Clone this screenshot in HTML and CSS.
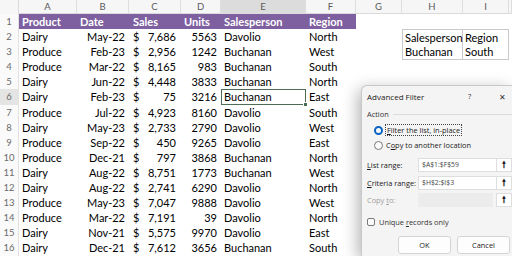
FILE: index.html
```html
<!DOCTYPE html>
<html>
<head>
<meta charset="utf-8">
<link rel="stylesheet" href="styles.css">
</head>
<body>
<div class="sheet">
  <div class="row colhead">
    <div class="corner"></div>
    <div class="ch">A</div><div class="ch">B</div><div class="ch">C</div><div class="ch">D</div>
    <div class="ch sel">E</div><div class="ch">F</div><div class="ch">G</div><div class="ch">H</div><div class="ch">I</div><div class="ch"></div>
  </div>
  <div class="row head">
    <div class="rn">1</div>
    <div class="c th">Product</div><div class="c th">Date</div><div class="c th sales-h">Sales</div><div class="c th">Units</div><div class="c th">Salesperson</div><div class="c th">Region</div>
    <div class="c"></div><div class="c"></div><div class="c"></div><div class="c"></div>
  </div>
  <div class="row"><div class="rn">2</div><div class="c">Dairy</div><div class="c r">May-22</div><div class="c acc"><span>$</span><span>7,686</span></div><div class="c r">5563</div><div class="c">Davolio</div><div class="c">North</div><div class="c"></div><div class="c crit ctl">Salesperson</div><div class="c crit ctr">Region</div><div class="c"></div></div>
  <div class="row"><div class="rn">3</div><div class="c">Produce</div><div class="c r">Feb-23</div><div class="c acc"><span>$</span><span>2,956</span></div><div class="c r">1242</div><div class="c">Buchanan</div><div class="c">West</div><div class="c"></div><div class="c crit cbl">Buchanan</div><div class="c crit cbr">South</div><div class="c"></div></div>
  <div class="row"><div class="rn">4</div><div class="c">Produce</div><div class="c r">Mar-22</div><div class="c acc"><span>$</span><span>8,165</span></div><div class="c r">983</div><div class="c">Buchanan</div><div class="c">South</div></div>
  <div class="row"><div class="rn">5</div><div class="c">Dairy</div><div class="c r">Jun-22</div><div class="c acc"><span>$</span><span>4,448</span></div><div class="c r">3833</div><div class="c">Buchanan</div><div class="c">North</div></div>
  <div class="row"><div class="rn rsel">6</div><div class="c">Dairy</div><div class="c r">Feb-23</div><div class="c acc"><span>$</span><span>75</span></div><div class="c r">3216</div><div class="c active">Buchanan<span class="handle"></span></div><div class="c">East</div></div>
  <div class="row"><div class="rn">7</div><div class="c">Produce</div><div class="c r">Jul-22</div><div class="c acc"><span>$</span><span>4,923</span></div><div class="c r">8160</div><div class="c">Davolio</div><div class="c">South</div></div>
  <div class="row"><div class="rn">8</div><div class="c">Dairy</div><div class="c r">May-23</div><div class="c acc"><span>$</span><span>2,733</span></div><div class="c r">2790</div><div class="c">Davolio</div><div class="c">West</div></div>
  <div class="row"><div class="rn">9</div><div class="c">Produce</div><div class="c r">Sep-22</div><div class="c acc"><span>$</span><span>450</span></div><div class="c r">9265</div><div class="c">Davolio</div><div class="c">East</div></div>
  <div class="row"><div class="rn">10</div><div class="c">Produce</div><div class="c r">Dec-21</div><div class="c acc"><span>$</span><span>797</span></div><div class="c r">3868</div><div class="c">Buchanan</div><div class="c">North</div></div>
  <div class="row"><div class="rn">11</div><div class="c">Dairy</div><div class="c r">Aug-22</div><div class="c acc"><span>$</span><span>8,751</span></div><div class="c r">1773</div><div class="c">Buchanan</div><div class="c">West</div></div>
  <div class="row"><div class="rn">12</div><div class="c">Dairy</div><div class="c r">Aug-22</div><div class="c acc"><span>$</span><span>2,741</span></div><div class="c r">6290</div><div class="c">Davolio</div><div class="c">North</div></div>
  <div class="row"><div class="rn">13</div><div class="c">Produce</div><div class="c r">May-23</div><div class="c acc"><span>$</span><span>7,047</span></div><div class="c r">9888</div><div class="c">Davolio</div><div class="c">West</div></div>
  <div class="row"><div class="rn">14</div><div class="c">Produce</div><div class="c r">Mar-22</div><div class="c acc"><span>$</span><span>7,191</span></div><div class="c r">39</div><div class="c">Davolio</div><div class="c">North</div></div>
  <div class="row"><div class="rn">15</div><div class="c">Dairy</div><div class="c r">Nov-21</div><div class="c acc"><span>$</span><span>5,575</span></div><div class="c r">9970</div><div class="c">Davolio</div><div class="c">East</div></div>
  <div class="row"><div class="rn">16</div><div class="c">Dairy</div><div class="c r">Dec-21</div><div class="c acc"><span>$</span><span>7,612</span></div><div class="c r">3656</div><div class="c">Buchanan</div><div class="c">South</div></div>
</div>

<div class="dialog">
  <div class="titlebar">
    <span class="title">Advanced Filter</span>
    <span class="help">?</span>
    <span class="close">✕</span>
  </div>
  <div class="body">
    <div class="group"><span>Action</span><span class="line"></span></div>
    <div class="radio-row"><span class="radio on"></span><span class="focus"><u>F</u>ilter the list, in-place</span></div>
    <div class="radio-row"><span class="radio"></span><span>C<u>o</u>py to another location</span></div>
    <div class="field first"><span class="lbl"><u>L</u>ist range:</span><span class="inp">$A$1:$F$59</span><span class="pick">🠕</span></div>
    <div class="field"><span class="lbl"><u>C</u>riteria range:</span><span class="inp">$H$2:$I$3</span><span class="pick">🠕</span></div>
    <div class="field dis"><span class="lbl">Copy <u>t</u>o:</span><span class="inp off"></span><span class="pick">🠕</span></div>
    <div class="check-row"><span class="box"></span><span>Unique <u>r</u>ecords only</span></div>
    <div class="buttons"><span class="btn">OK</span><span class="btn">Cancel</span></div>
  </div>
</div>
</body>
</html>
```

FILE: styles.css
```css
html, body {
  margin: 0;
  padding: 0;
  width: 512px;
  height: 256px;
  overflow: hidden;
  background: #ffffff;
}
.sheet {
  font-family: Lato, "Liberation Sans", sans-serif;
  font-size: 11px;
  color: #000;
}
.row {
  display: grid;
  grid-template-columns: 19px 58px 52px 52px 40px 85px 50px 46px 61px 46px 3px;
  height: 15.1px;
  line-height: 15.1px;
}
.colhead {
  height: 14px;
  line-height: 14px;
  background: #f6f6f6;
  border-bottom: 1px solid #dadada;
  box-sizing: border-box;
}
.corner { background: #f6f6f6; border-right: 1px solid #dadada; }
.ch {
  text-align: center;
  font-size: 9.5px;
  color: #5a5a5a;
  border-right: 1px solid #dedede;
}
.ch.sel { background: #dcdcdc; }
.rn {
  font-size: 9.5px;
  color: #6a6a6a;
  text-align: center;
  background: #fafafa;
  border-right: 1px solid #e2e2e2;
}
.rn.rsel { background: #e4e4e4; }
.c {
  padding: 0 2px 0 3px;
  white-space: nowrap;
  overflow: visible;
  position: relative;
}
.r { text-align: right; padding-right: 4px; }
.head .th {
  background: #7e60a0;
  color: #fff;
  font-weight: 700;
}
.sales-h { padding-left: 4px; }
.acc {
  display: flex;
  justify-content: space-between;
  padding: 0 5px 0 4px;
}
.active {
  outline: 1.5px solid #4e6b58;
  outline-offset: -1px;
}
.handle {
  position: absolute;
  right: -2px;
  bottom: -2px;
  width: 3px;
  height: 3px;
  background: #4e6b58;
  border: 1px solid #fff;
}
.crit {
  border-color: #c9c9c9;
  border-style: solid;
  border-width: 0;
  padding-left: 2px;
}
.ctl { border-width: 1px 1px 0 1px; }
.ctr { border-width: 1px 1px 0 0; }
.cbl { border-width: 0 1px 1px 1px; }
.cbr { border-width: 0 1px 1px 0; }

/* dialog */
.dialog {
  position: absolute;
  left: 361px;
  top: 85px;
  width: 151px;
  height: 171px;
  background: #f4f4f4;
  border: 1px solid #c8c8c8;
  border-right: none;
  border-bottom: none;
  border-radius: 6px 0 0 0;
  box-shadow: -3px 4px 16px rgba(0,0,0,0.30);
  font-family: "Open Sans", "Noto Sans", sans-serif;
  font-size: 7.4px;
  color: #1b1b1b;
  box-sizing: border-box;
  overflow: hidden;
}
.titlebar {
  height: 20px;
  display: flex;
  align-items: center;
  padding-left: 5px;
  font-size: 8px;
}
.title { width: 101px; }
.help { width: 31px; color: #333; font-size: 7.5px; }
.close { font-size: 8px; color: #333; }
.body {
  display: flex;
  flex-direction: column;
  padding: 0 0 0 5px;
}
.group {
  margin-top: 2px;
  height: 12px;
  display: flex;
  align-items: center;
  color: #333;
}
.line {
  flex: 1;
  height: 1px;
  background: #dcdcdc;
  margin-left: 4px;
}
.radio-row {
  height: 15px;
  display: flex;
  align-items: center;
  padding-left: 7px;
}
.group + .radio-row { margin-top: 2.5px; }
.radio {
  width: 9px;
  height: 9px;
  box-sizing: border-box;
  border-radius: 50%;
  border: 1px solid #7a7a7a;
  background: #fbfbfb;
  margin-right: 3px;
}
.radio.on {
  border: 2.6px solid #0a63c2;
  background: #fff;
}
.focus {
  outline: 1px dotted #444;
  outline-offset: 0;
  padding: 0 1px;
}
u { text-decoration: underline; text-underline-offset: 1px; }
.field {
  height: 14px;
  display: flex;
  align-items: center;
  margin-top: 3.5px;
}
.field.first { margin-top: 5.5px; }
.lbl { width: 51px; }
.inp {
  width: 78px;
  height: 14px;
  box-sizing: border-box;
  background: #fff;
  border: 1px solid #dedede;
  border-right: none;
  font-size: 6.8px;
  color: #444;
  line-height: 12px;
  padding-left: 3px;
}
.inp.off {
  background: #ececec;
  width: 75px;
  margin-right: 3px;
  border: none;
}
.pick {
  width: 16px;
  height: 14px;
  box-sizing: border-box;
  background: #fff;
  border: 1px solid #dedede;
  text-align: center;
  font-family: "DejaVu Sans", sans-serif;
  font-size: 9px;
  font-weight: 700;
  line-height: 12px;
  color: #111;
}
.dis .lbl { color: #9e9e9e; }
.check-row {
  height: 12px;
  margin-top: 8.5px;
  display: flex;
  align-items: center;
  color: #333;
}
.box {
  width: 8px;
  height: 8px;
  box-sizing: border-box;
  border: 1px solid #7a7a7a;
  border-radius: 2px;
  background: #fbfbfb;
  margin-right: 4px;
}
.buttons {
  margin-top: 8.5px;
  display: flex;
  gap: 6px;
  padding-left: 31px;
}
.btn {
  width: 53px;
  height: 18px;
  box-sizing: border-box;
  background: #fdfdfd;
  border: 1px solid #d4d4d4;
  border-radius: 3px;
  text-align: center;
  line-height: 16px;
  font-size: 7.4px;
}
```
